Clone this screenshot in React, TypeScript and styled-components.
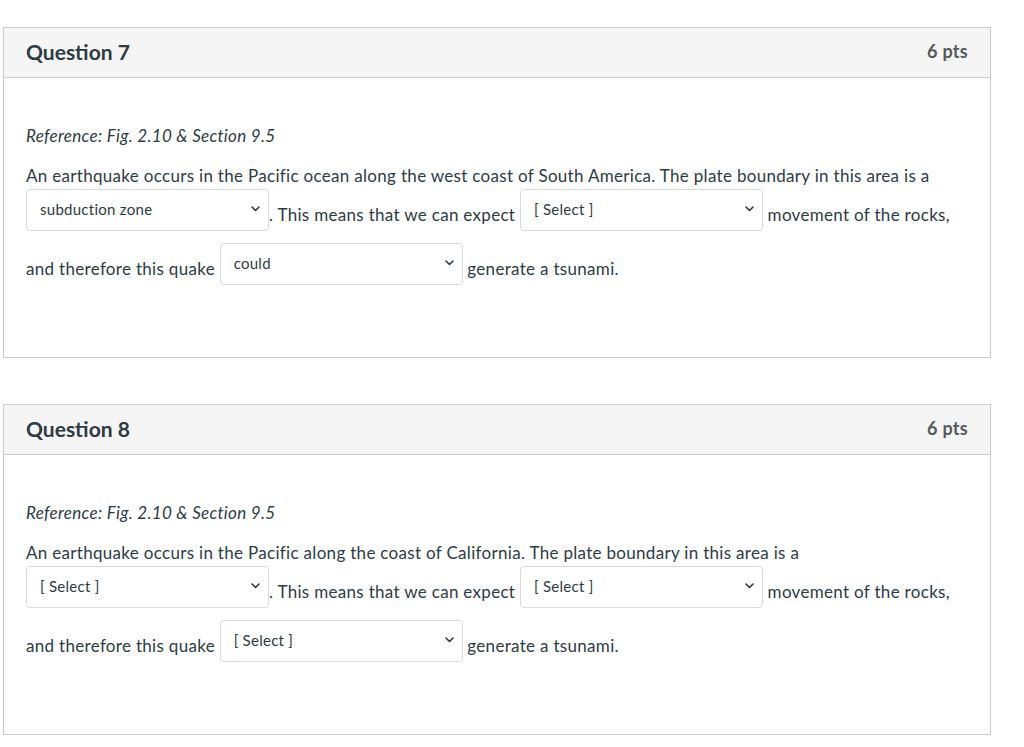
import React from "react";
import styled, { createGlobalStyle } from "styled-components";

const Global = createGlobalStyle`
  html, body { margin: 0; padding: 0; background: #fff; }
  body { font-family: Lato, "Noto Sans", sans-serif; color: #2d3b45; }
`;

const Page = styled.div`
  padding: 27px 0 0 3px;
  width: 988px;
`;

const Card = styled.section`
  border: 1px solid #c7cdd1;
  background: #fff;
  margin-bottom: 46px;
`;

const Header = styled.div`
  display: flex;
  align-items: center;
  justify-content: space-between;
  height: 49px;
  padding: 0 22px;
  background: #f5f5f5;
  border-bottom: 1px solid #c7cdd1;
`;

const Title = styled.h2`
  margin: 0 0 3px;
  font-size: 21px;
  font-weight: 700;
  color: #2d3b45;
`;

const Points = styled.span`
  margin-bottom: 3px;
  font-size: 18px;
  font-weight: 700;
  letter-spacing: 0.3px;
  color: #555a5e;
`;

const Body = styled.div`
  padding: 46px 22px 59px;
  font-size: 17px;
  letter-spacing: 0.31px;
`;

const RefLine = styled.p`
  margin: 0;
  line-height: 24px;
  font-style: italic;
`;

const QuestionText = styled.p`
  margin: 14px 0 0;
  line-height: 28px;
`;

const Dropdown = styled.span`
  display: inline-flex;
  align-items: center;
  justify-content: space-between;
  box-sizing: border-box;
  width: 243px;
  height: 42px;
  margin: -1px 0 13px;
  padding: 0 8px 2px 13px;
  vertical-align: middle;
  border: 1px solid #d7dbde;
  border-radius: 4px;
  background: #fff;
  font-size: 15px;
  letter-spacing: 0.27px;
  line-height: 20px;
  color: #2d3b45;
`;

const Chevron = () => (
  <svg width="9" height="6" viewBox="0 0 9 6" aria-hidden="true">
    <path d="M1 1 L4.5 4.5 L8 1" fill="none" stroke="#2d3b45" strokeWidth="1.6" strokeLinecap="round" strokeLinejoin="round" />
  </svg>
);

const Select = ({ value }: { value: string }) => (
  <Dropdown role="combobox">
    <span>{value}</span>
    <Chevron />
  </Dropdown>
);

type Q = {
  n: number;
  intro: string;
  a: string;
  b: string;
  c: string;
};

const questions: Q[] = [
  {
    n: 7,
    intro:
      "An earthquake occurs in the Pacific ocean along the west coast of South America. The plate boundary in this area is a",
    a: "subduction zone",
    b: "[ Select ]",
    c: "could",
  },
  {
    n: 8,
    intro:
      "An earthquake occurs in the Pacific along the coast of California. The plate boundary in this area is a",
    a: "[ Select ]",
    b: "[ Select ]",
    c: "[ Select ]",
  },
];

export default function App() {
  return (
    <>
      <Global />
      <Page>
        {questions.map((q) => (
          <Card key={q.n}>
            <Header>
              <Title>Question {q.n}</Title>
              <Points>6 pts</Points>
            </Header>
            <Body>
              <RefLine>Reference: Fig. 2.10 &amp; Section 9.5</RefLine>
              <QuestionText>
                {q.intro} <Select value={q.a} />. This means that we can expect{" "}
                <Select value={q.b} /> movement of the rocks, and therefore this quake{" "}
                <Select value={q.c} /> generate a tsunami.
              </QuestionText>
            </Body>
          </Card>
        ))}
      </Page>
    </>
  );
}
